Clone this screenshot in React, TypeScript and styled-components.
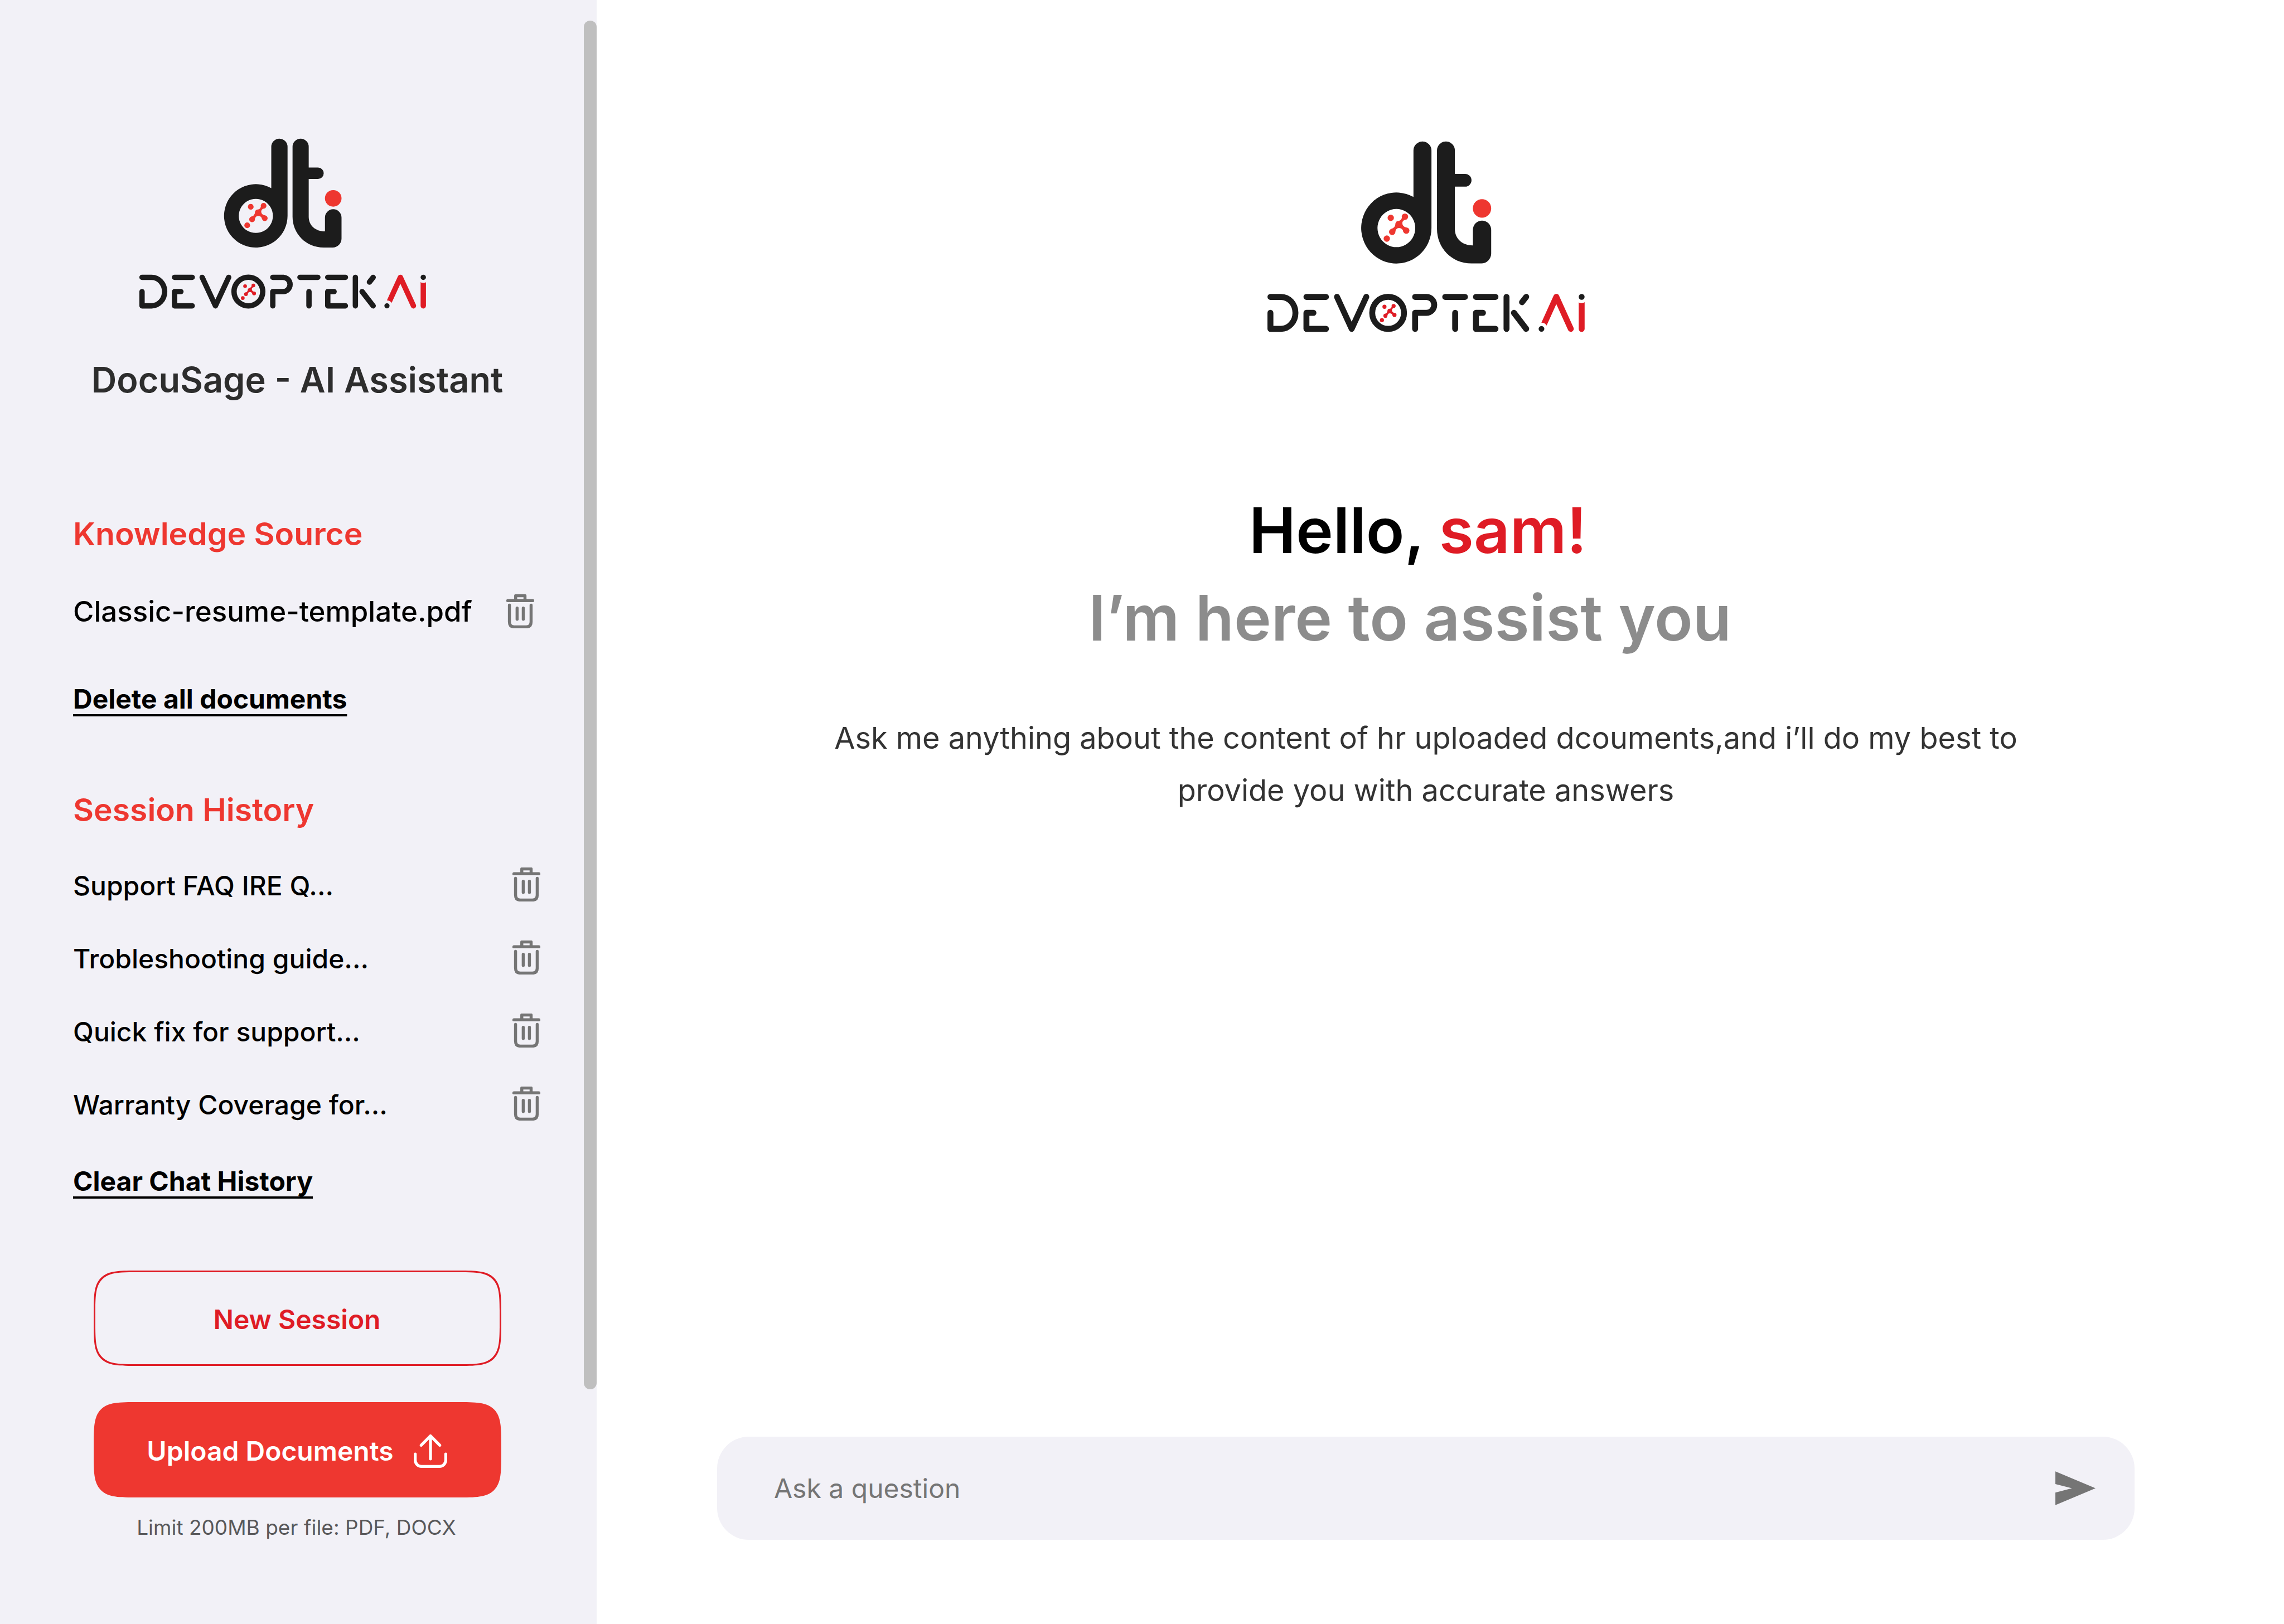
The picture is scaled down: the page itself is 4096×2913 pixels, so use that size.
import React, { useId, useState } from "react";
import styled, { createGlobalStyle } from "styled-components";

const color = {
  panel: "#f2f1f7",
  ink: "#1c1c1c",
  red: "#ee3730",
  deepRed: "#df1c25",
  icon: "#757575",
};

const GlobalStyle = createGlobalStyle`
  *, *::before, *::after { box-sizing: border-box; }
  body {
    margin: 0;
    background: #ffffff;
    color: #000000;
    font-family: Inter, "Liberation Sans", sans-serif;
    font-optical-sizing: none;
  }
  h1, h2, p, ul { margin: 0; padding: 0; }
  button, input { font: inherit; color: inherit; border: 0; background: none; padding: 0; margin: 0; }
  button { cursor: pointer; }
`;

const Page = styled.div`
  display: flex;
  min-height: 100vh;
`;

const Sidebar = styled.aside`
  position: relative;
  flex: none;
  width: 1070px;
  padding: 248px 4px 96px 0;
  background: ${color.panel};
`;

const ScrollThumb = styled.div`
  position: absolute;
  top: 37px;
  right: 0;
  bottom: 421px;
  width: 23px;
  border-radius: 12px;
  background: #bfbfbf;
`;

const Brand = styled.header`
  display: flex;
  flex-direction: column;
  align-items: center;
`;

const BrandLogo = styled.div`
  padding-right: 52px;
`;

const LogoSvg = styled.svg<{ $w: number; $h: number }>`
  display: block;
  width: ${(p) => p.$w}px;
  height: ${(p) => p.$h}px;
`;

const AppTitle = styled.h1`
  margin-top: 88px;
  font-size: 63px;
  line-height: 76px;
  font-weight: 600;
  color: #2d2d2d;
  white-space: nowrap;
`;

const Section = styled.section<{ $gap: number }>`
  margin-top: ${(p) => p.$gap}px;
  padding: 0 97px 0 131px;
`;

const SectionTitle = styled.h2`
  font-size: 57px;
  line-height: 70px;
  font-weight: 600;
  color: ${color.red};
`;

const SourceRow = styled.div`
  display: flex;
  align-items: center;
  justify-content: space-between;
  height: 62px;
  margin-top: 72px;
  padding-right: 11px;
  font-size: 51px;
  font-weight: 500;
  white-space: nowrap;
`;

const HistoryList = styled.ul`
  margin-top: 35px;
  list-style: none;
`;

const HistoryRow = styled.li`
  display: flex;
  align-items: center;
  justify-content: space-between;
  height: 131px;
  font-size: 48px;
  font-weight: 500;
  white-space: nowrap;
`;

const IconButton = styled.button<{ $lift?: boolean }>`
  display: flex;
  padding-bottom: ${(p) => (p.$lift ? 5 : 0)}px;
  color: ${color.icon};
`;

const TrashSvg = styled.svg`
  display: block;
  width: 50px;
  height: 61px;
`;

const TextAction = styled.button<{ $gap: number }>`
  display: block;
  margin-top: ${(p) => p.$gap}px;
  font-size: 48px;
  line-height: 58px;
  font-weight: 700;
  text-decoration: underline;
  text-decoration-thickness: 4px;
  text-underline-offset: 10px;
  text-decoration-skip-ink: none;
`;

const Actions = styled.div`
  display: flex;
  flex-direction: column;
  margin-top: 131px;
  padding: 0 167px 0 168px;
`;

const ActionButton = styled.button<{ $filled?: boolean }>`
  display: flex;
  align-items: center;
  justify-content: center;
  gap: 36px;
  height: 171px;
  padding: 4px 2px 0 0;
  border: 3px solid ${(p) => (p.$filled ? color.red : color.deepRed)};
  border-radius: 46px;
  background: ${(p) => (p.$filled ? color.red : "transparent")};
  color: ${(p) => (p.$filled ? "#ffffff" : color.deepRed)};
  font-size: 48px;
  font-weight: 600;
  white-space: nowrap;

  & + & { margin-top: 65px; }

  @supports (corner-shape: squircle) {
    border-radius: 82px;
    corner-shape: squircle;
  }
`;

const UploadSvg = styled.svg`
  display: block;
  width: 60px;
  height: 60px;
`;

const Hint = styled.p`
  margin-top: 32px;
  padding-right: 4px;
  font-size: 37px;
  line-height: 44px;
  color: #58585a;
  text-align: center;
`;

const Main = styled.main`
  flex: 1;
  display: flex;
  flex-direction: column;
  align-items: center;
  padding: 253px 268px 151px 216px;
`;

const Greeting = styled.h1`
  margin-top: 276px;
  font-size: 113px;
  line-height: 157px;
  font-weight: 600;
  text-align: center;
  white-space: pre;
`;

const UserName = styled.span`
  color: ${color.deepRed};
`;

const Tagline = styled.span`
  display: block;
  color: #8c8c8c;
`;

const Intro = styled.p`
  max-width: 2200px;
  margin-top: 90px;
  font-size: 54px;
  line-height: 94px;
  color: #333333;
  text-align: center;
`;

const AskForm = styled.form`
  display: flex;
  align-items: center;
  align-self: stretch;
  height: 185px;
  margin-top: auto;
  padding: 0 70px 0 102px;
  border-radius: 57px;
  background: ${color.panel};
`;

const AskInput = styled.input`
  flex: 1;
  height: 100%;
  outline: none;
  font-size: 48px;
  &::placeholder { color: ${color.icon}; opacity: 1; }
`;

const SendSvg = styled.svg`
  display: block;
  width: 72px;
  height: 61px;
`;

function Molecule({ x, y, scale, fill }: { x: number; y: number; scale: number; fill: string }) {
  return (
    <g transform={`translate(${x} ${y}) scale(${scale})`} fill={fill}>
      <circle cx="-18.3" cy="-14.3" r="7.2" />
      <circle cx="-27.3" cy="32.4" r="7.2" />
      <circle cx="14" cy="-17" r="7.2" />
      <circle cx="17" cy="14.4" r="7.2" />
      <circle cx="-15" cy="17.4" r="7.2" />
      <path d="M-7.6 -2 Q-6 -7.5 0 -7.5 Q5.500 -8.500 7.200 -15 L19 -11.500 Q8.500 -9.500 8 -3 Q8 6 18 7.500 L10.500 17 Q8.500 8.500 0.500 8.500 Q-7.500 8.500 -8.500 20 L-18 11 Q-7.500 8.500 -7.600 -2 Z" />
    </g>
  );
}

function Logo({ width, height }: { width: number; height: number }) {
  const maskId = useId();
  return (
    <LogoSvg $w={width} $h={height} viewBox="350 348 725 432" preserveAspectRatio="none" role="img" aria-label="Devoptek.Ai">
      <mask id={maskId} maskUnits="userSpaceOnUse" x="350" y="680" width="725" height="100">
        <rect x="350" y="680" width="725" height="100" fill="#fff" />
        <circle cx="975.200" cy="771" r="14" fill="#000" />
        <circle cx="1066.700" cy="699" r="14" fill="#000" />
      </mask>
      <g fill={color.ink}>
        <path fillRule="evenodd" d="M683.700 369.500 a20.500 20.500 0 0 1 41 0 V544 a80 80 0 1 1 -41 -70 Z M644.800 501 a43 43 0 1 0 0.010 0 Z" />
        <path d="M737.300 369.300 a20.350 20.350 0 0 1 40.700 0 V422 H801.500 a14.300 14.300 0 0 1 0 28.700 H778 V546 C778 568 795 583 819 583 V548 a20.850 20.850 0 0 1 41.700 0 V601 a22.500 22.500 0 0 1 -22.500 22.700 H816 C770 623.700 737.300 588 737.300 546 Z" />
      </g>
      <circle cx="839.800" cy="499.700" r="20.900" fill={color.red} />
      <Molecule x={650.3} y={535.3} scale={1} fill={color.red} />
      <g fill="none" stroke={color.ink} strokeWidth="13.500" strokeLinecap="round" strokeLinejoin="round">
        <path d="M358 699 H382 a33 36 0 0 1 0 72 H358 V735" />
        <path d="M440 699 H484.500 M456 735 H440 V771 H484.500" />
        <path d="M509.600 699 L543 771 L576.300 699" />
        <circle cx="626" cy="735" r="36.200" />
        <path d="M687.500 699 H713 a18 18 0 0 1 0 36 H687.500 V771" />
        <path d="M756 699 H801 M778.700 735 V771" />
        <path d="M826 699 H870.500 M842 735 H826 V771 H870.500" />
        <path d="M895.600 699 V771 M940.400 699 L931 711 M912.500 735 L940.400 771" />
      </g>
      <Molecule x={629.5} y={730.5} scale={0.645} fill={color.deepRed} />
      <circle cx="975.200" cy="771" r="6.500" fill={color.ink} />
      <circle cx="1066.700" cy="699" r="6.700" fill={color.ink} />
      <g mask={`url(#${maskId})`} fill="none" stroke={color.deepRed} strokeWidth="13.500" strokeLinecap="round" strokeLinejoin="round">
        <path d="M977 769 L1009 699 L1041.900 771" />
        <path d="M1066.700 704 V771" />
      </g>
    </LogoSvg>
  );
}

function TrashIcon() {
  return (
    <TrashSvg viewBox="48 50 212 259" fill="none" stroke="currentColor" strokeWidth="23" strokeLinecap="round" strokeLinejoin="round" aria-hidden="true">
      <path d="M59 98 H249" />
      <path d="M119 96 V61 H190 V96" />
      <path d="M71.500 133 V260 Q71.500 298 108 298 H200 Q236.500 298 236.500 260 V133" />
      <path d="M130 155 V240 M177 155 V240" />
    </TrashSvg>
  );
}

function UploadIcon() {
  return (
    <UploadSvg viewBox="72 78 252 252" fill="none" stroke="currentColor" strokeWidth="22" strokeLinecap="round" strokeLinejoin="round" aria-hidden="true">
      <path d="M198 262 V92 M128 159 L198 89 L268 159" />
      <path d="M83 226 V271 a48 48 0 0 0 48 48 H265 a48 48 0 0 0 48 -48 V226" />
    </UploadSvg>
  );
}

function SendIcon() {
  return (
    <SendSvg viewBox="0 0 303 255" fill="currentColor" aria-hidden="true">
      <path d="M0 0 L303 127.500 L0 255 V160 L125 127.500 L0 96 Z" />
    </SendSvg>
  );
}

const sessions = ["Support FAQ IRE Q...", "Trobleshooting guide...", "Quick fix for support...", "Warranty Coverage for..."];

export default function App() {
  const [question, setQuestion] = useState("");
  return (
    <>
      <GlobalStyle />
      <Page>
        <Sidebar>
          <Brand>
            <BrandLogo>
              <Logo width={516} height={307} />
            </BrandLogo>
            <AppTitle>DocuSage - AI Assistant</AppTitle>
          </Brand>

          <Section $gap={204}>
            <SectionTitle>Knowledge Source</SectionTitle>
            <SourceRow>
              <span>Classic-resume-template.pdf</span>
              <IconButton type="button" aria-label="Delete Classic-resume-template.pdf">
                <TrashIcon />
              </IconButton>
            </SourceRow>
            <TextAction type="button" $gap={98}>Delete all documents</TextAction>
          </Section>

          <Section $gap={135}>
            <SectionTitle>Session History</SectionTitle>
            <HistoryList>
              {sessions.map((name) => (
                <HistoryRow key={name}>
                  <span>{name}</span>
                  <IconButton type="button" $lift aria-label={`Delete ${name}`}>
                    <TrashIcon />
                  </IconButton>
                </HistoryRow>
              ))}
            </HistoryList>
            <TextAction type="button" $gap={43}>Clear Chat History</TextAction>
          </Section>

          <Actions>
            <ActionButton type="button">New Session</ActionButton>
            <ActionButton type="button" $filled>
              Upload Documents
              <UploadIcon />
            </ActionButton>
            <Hint>Limit 200MB per file: PDF, DOCX</Hint>
          </Actions>
          <ScrollThumb />
        </Sidebar>

        <Main>
          <Logo width={571} height={344} />
          <Greeting>
            Hello, <UserName>sam! </UserName>
            <Tagline>{"I’m here to assist you  "}</Tagline>
          </Greeting>
          <Intro>
            Ask me anything about the content of hr uploaded dcouments,and i’ll do my best to provide you with accurate answers
          </Intro>
          <AskForm onSubmit={(e) => e.preventDefault()}>
            <AskInput
              type="text"
              aria-label="Ask a question"
              placeholder="Ask a question"
              value={question}
              onChange={(e) => setQuestion(e.target.value)}
            />
            <IconButton type="submit" aria-label="Send">
              <SendIcon />
            </IconButton>
          </AskForm>
        </Main>
      </Page>
    </>
  );
}
